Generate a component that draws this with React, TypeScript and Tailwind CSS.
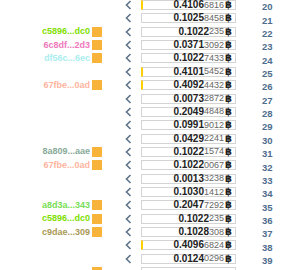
import React from "react";

type Row = { n: number; big: string; small: string; bar?: boolean; label?: string; color?: string };

const rows: Row[] = [
  { n: 20, big: "0.4106", small: "6816", bar: true },
  { n: 21, big: "0.1025", small: "8458" },
  { n: 22, big: "0.1022", small: "235", label: "c5896...dc0", color: "#7ee000" },
  { n: 23, big: "0.0371", small: "3092", label: "6c8df...2d3", color: "#ee77bb" },
  { n: 24, big: "0.1022", small: "7433", label: "df56c...6ec", color: "#aaeeee" },
  { n: 25, big: "0.4101", small: "5452", bar: true },
  { n: 26, big: "0.4092", small: "4432", bar: true, label: "67fbe...0ad", color: "#ffb4a0" },
  { n: 27, big: "0.0073", small: "2872" },
  { n: 28, big: "0.2049", small: "4848" },
  { n: 29, big: "0.0991", small: "9012" },
  { n: 30, big: "0.0429", small: "2241" },
  { n: 31, big: "0.1022", small: "1574", label: "8a809...aae", color: "#88aa99" },
  { n: 32, big: "0.1022", small: "0067", label: "67fbe...0ad", color: "#ffb4a0" },
  { n: 33, big: "0.0013", small: "3238" },
  { n: 34, big: "0.1030", small: "1412" },
  { n: 35, big: "0.2047", small: "7292", label: "a8d3a...343", color: "#77dd55" },
  { n: 36, big: "0.1022", small: "235", label: "c5896...dc0", color: "#7ee000" },
  { n: 37, big: "0.1028", small: "308", label: "c9dae...309", color: "#aa9955" },
  { n: 38, big: "0.4096", small: "6824", bar: true },
  { n: 39, big: "0.0124", small: "0296" },
];

function Chevron() {
  return (
    <svg width="7" height="10" viewBox="0 0 7 10" className="block">
      <polyline points="5.5,1 1.5,5 5.5,9" fill="none" stroke="#5e7389" strokeWidth="1.6" />
    </svg>
  );
}

export default function App() {
  return (
    <div
      className="w-[301px] h-[270px] overflow-hidden bg-white"
      style={{ fontFamily: '"Liberation Sans", Arial, sans-serif' }}
    >
      <div className="flex flex-col">
        {rows.map((r) => (
          <div key={r.n} className="flex items-start h-[13.37px] shrink-0">
            <div
              className="w-[90px] h-[10px] flex items-center justify-end text-[9px] font-bold leading-none"
              style={{ color: r.color }}
            >
              {r.label}
            </div>
            <div className="w-[10px] h-[10px] ml-[2px]">
              {r.label !== undefined && <div className="w-[10px] h-[10px] bg-[#f8b43a]" />}
            </div>
            <div className="ml-[23px] w-[16px] h-[10px] flex items-center">
              <Chevron />
            </div>
            <div
              className={`w-[95px] h-[10px] bg-white border border-[#d4d4d4] flex items-center justify-end pr-[3px] leading-none ${
                r.bar ? "border-l-2 border-l-[#ffd000]" : ""
              }`}
            >
              <span className="text-[10px] font-bold text-[#222]">{r.big}</span>
              <span className="text-[9px] text-[#666]">{r.small}</span>
              <span
                className="text-[10px] font-bold text-[#222] ml-[1px]"
                style={{ fontFamily: '"DejaVu Sans", sans-serif' }}
              >
                ฿
              </span>
            </div>
            <div className="ml-[26px] mt-[2px] h-[10px] flex items-center text-[9.5px] font-bold text-[#4d6d8d] leading-none">
              {r.n}
            </div>
          </div>
        ))}
        <div className="flex items-start h-[13.37px] shrink-0">
          <div className="w-[90px] h-[10px]" />
          <div className="w-[10px] h-[10px] ml-[2px] bg-[#f8b43a]" />
          <div className="ml-[23px] w-[16px] h-[10px]" />
          <div className="w-[95px] h-[10px] bg-white border border-[#d4d4d4]" />
        </div>
      </div>
    </div>
  );
}
